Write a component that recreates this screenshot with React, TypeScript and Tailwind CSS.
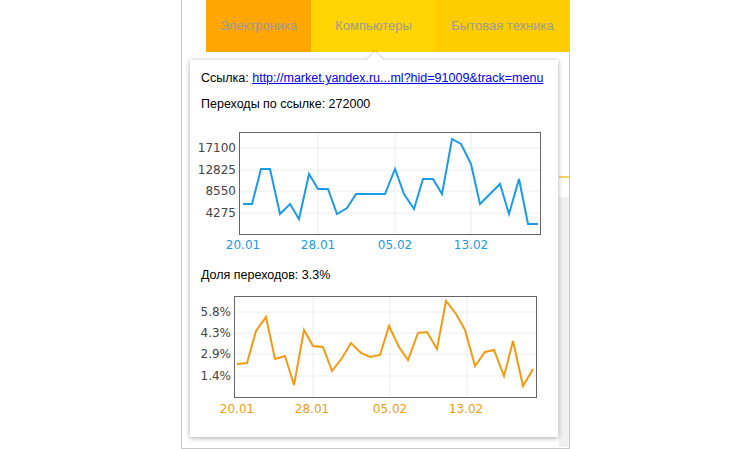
const blue: [number, number][] = [[243,203],[252,203],[261,168],[270,168],[280,213],[290,203],[299,218],[309,173],[318,188],[328,188],[337,213],[347,207],[356,193],[366,193],[376,193],[385,193],[395,168],[404,193],[414,208],[423,178],[433,178],[442,193],[452,138],[461,143],[471,163],[480,203],[490,193],[500,183],[509,213],[519,178],[528,223],[538,223]];
const orange: [number, number][] = [[237,371],[247,370],[256,338],[266,324],[275,366],[285,363],[294,392],[304,337],[313,353],[323,354],[332,378],[342,365],[351,350],[361,360],[370,364],[380,362],[389,333],[399,354],[408,367],[418,340],[427,339],[437,356],[446,308],[456,321],[465,337],[475,373],[485,359],[494,357],[504,383],[513,348],[523,393],[533,376]];

type ChartProps = {
  oy: number;
  box: [number, number, number, number];
  pts: [number, number][];
  color: string;
  yLabels: [string, number][];
  labelX: number;
  xLabels: [string, number][];
  xLabelY: number;
  grid: number[];
};

function Chart({ oy, box, pts, color, yLabels, labelX, xLabels, xLabelY, grid }: ChartProps) {
  const ox = 190;
  const [x1, y1, x2, y2] = box;
  return (
    <svg width={368} height={130} className="block" style={{ fontFamily: '"DejaVu Sans", sans-serif' }}>
      <g transform={`translate(${-ox},${-oy})`}>
        {yLabels.map(([, y]) => (
          <line key={y} x1={x1} x2={x2} y1={y} y2={y} stroke="#ececec" strokeWidth={1} />
        ))}
        {grid.map((x) => (
          <line key={x} x1={x} x2={x} y1={y1} y2={y2} stroke="#ececec" strokeWidth={1} />
        ))}
        <rect x={x1 + 0.5} y={y1 + 0.5} width={x2 - x1} height={y2 - y1} fill="none" stroke="#666" />
        <polyline points={pts.map((p) => p.join(",")).join(" ")} fill="none" stroke={color} strokeWidth={2} strokeLinejoin="miter" />
        {yLabels.map(([t, y]) => (
          <text key={t} x={labelX} y={y + 4} textAnchor="end" fontSize={12} fill="#444">{t}</text>
        ))}
        {xLabels.map(([t, x]) => (
          <text key={t} x={x} y={xLabelY + 4} textAnchor="middle" fontSize={12} fill={color}>{t}</text>
        ))}
      </g>
    </svg>
  );
}

export default function App() {
  return (
    <div className="w-[750px] h-[449px] bg-white relative overflow-hidden">
      <div className="ml-[181px] w-[389px] h-[449px] border-l border-r border-b border-[#c8c8c8] bg-white relative">
        <div className="flex h-[52px] text-[13px] text-[#9a9a9a]" style={{ fontFamily: '"Liberation Sans", Arial, sans-serif' }}>
          <div className="w-[24px] bg-white" />
          <div className="w-[105px] bg-[#ffa600] flex items-center justify-center">Электроника</div>
          <div className="w-[125px] bg-[#ffd400] flex items-center justify-center">Компьютеры</div>
          <div className="flex-1 bg-[#ffcc00] flex items-center justify-center">Бытовая техника</div>
        </div>
        <div className="h-[124px]" />
        <div className="h-[2px] bg-[#f5d35a] ml-[377px]" />
        <div className="h-[19px]" />
        <div className="h-[250px] bg-[#f0f0f0] ml-[377px]" />
      </div>

      <div
        className="absolute left-[190px] top-[60px] w-[368px] h-[377px] bg-white shadow-[0_1px_5px_rgba(0,0,0,0.35)] text-[12.5px] text-black"
        style={{ fontFamily: '"Liberation Sans", Arial, sans-serif' }}
      >
        <div className="absolute -top-[6px] left-[179px] w-[12px] h-[12px] bg-white rotate-45 shadow-[-1px_-1px_2px_rgba(0,0,0,0.15)]" />
        <div className="relative px-[11px] pt-[11px] whitespace-nowrap">
          <div className="leading-[15px]">
            Ссылка: <span className="text-[#0000ee] underline">http://market.yandex.ru...ml?hid=91009&amp;track=menu</span>
          </div>
          <div className="leading-[15px] mt-[11px]">Переходы по ссылке: 272000</div>
        </div>
        <div className="mt-[14px]">
          <Chart
            oy={125}
            box={[239, 131, 540, 233]}
            pts={blue}
            color="#1a9be8"
            yLabels={[["17100", 147], ["12825", 169], ["8550", 190], ["4275", 212]]}
            labelX={236}
            xLabels={[["20.01", 243], ["28.01", 318], ["05.02", 395], ["13.02", 471]]}
            xLabelY={244}
            grid={[318, 395, 471]}
          />
        </div>
        <div className="px-[11px] mt-[12px] leading-[15px]">Доля переходов: 3.3%</div>
        <div className="mt-[7px]">
          <Chart
            oy={297}
            box={[234, 303, 536, 404]}
            pts={orange}
            color="#f29b12"
            yLabels={[["5.8%", 319], ["4.3%", 340], ["2.9%", 361], ["1.4%", 383]]}
            labelX={231}
            xLabels={[["20.01", 237], ["28.01", 312], ["05.02", 390], ["13.02", 466]]}
            xLabelY={416}
            grid={[313, 390, 467]}
          />
        </div>
      </div>
    </div>
  );
}
